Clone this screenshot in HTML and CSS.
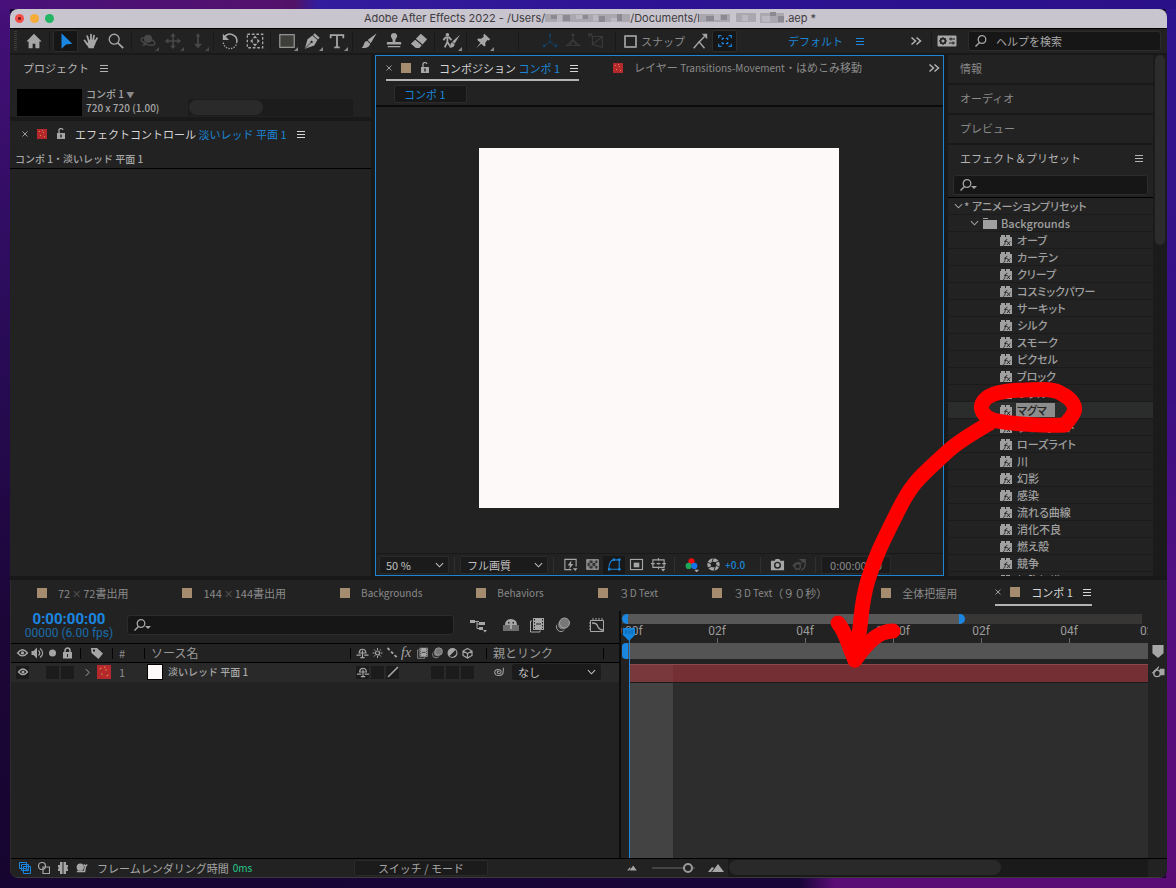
FILE: index.html
```
<!DOCTYPE html>
<html lang="ja">
  <head>
    <meta charset="UTF-8" />
    <meta name="viewport" content="width=device-width, initial-scale=1.0" />
    <title>Adobe After Effects 2022</title>
    <link rel="stylesheet" href="styles.css">
  </head>
  <body>
    <!-- icon sprite -->
    <svg class="sprite" aria-hidden="true">
      <symbol id="home" viewBox="0 0 20 20"><path fill="currentColor" d="M10 2 1.500 10.500H4V18h4.500v-5h3v5H16v-7.500h2.500z"/></symbol>
      <symbol id="arrow" viewBox="0 0 20 20"><path fill="currentColor" d="M5 1.500 17 13l-7 1-5 4.500z"/></symbol>
      <symbol id="hand" viewBox="0 0 20 20"><g fill="none" stroke="currentColor" stroke-linecap="round" stroke-width="2"><path d="M7.500 10 5.800 4.500M10 9V3M12.300 9.500l1-5.500M14.500 11l2.200-4M6 13.500 2.800 9.500"/></g><path fill="currentColor" d="M6.500 8.500h8.800c0 3-.3 5-1.300 6.500-.6 1-.8 2-.8 3H7.500C7 16 5 14.500 4 12.500l1-1 1.800 1z"/></symbol>
      <symbol id="zoom" viewBox="0 0 20 20"><g fill="none" stroke="currentColor"><circle cx="8" cy="8" r="5.500" stroke-width="1.500"/><path d="m12 12 6 6" stroke-width="2"/></g></symbol>
      <symbol id="orbit" viewBox="0 0 20 20"><g fill="none" stroke="currentColor" stroke-width="1.600"><ellipse cx="10" cy="10.500" rx="8" ry="3.500" transform="rotate(20 10 10.500)"/><path d="m4 15 3-1-1-3"/></g><circle cx="10" cy="7.500" r="4.500" fill="currentColor"/></symbol>
      <symbol id="pan" viewBox="0 0 20 20"><path fill="none" stroke="currentColor" stroke-width="1.800" d="M10 3v14M3 10h14"/><path fill="currentColor" d="m10 1 3 4H7zM10 19l-3-4h6zM1 10l4-3v6zM19 10l-4 3V7z"/></symbol>
      <symbol id="dolly" viewBox="0 0 20 20"><path fill="none" stroke="currentColor" stroke-width="2" d="M10 4v9"/><path fill="currentColor" d="m10 1 2.500 4h-5zM10 18l-4.500-5h9z"/></symbol>
      <symbol id="rotate" viewBox="0 0 20 20"><path fill="none" stroke="currentColor" stroke-width="1.800" d="M4 5.500A7.500 7.500 0 0 1 17.500 11"/><path fill="none" stroke="currentColor" stroke-width="1.500" stroke-dasharray="1.500 1.500" d="M17.500 11a7.500 7.500 0 0 1-15 0"/><path fill="currentColor" d="M2 2v7h7z"/></symbol>
      <symbol id="anchor" viewBox="0 0 20 20"><rect x="1.500" y="2.500" width="17" height="15" fill="none" stroke="currentColor" stroke-width="1.500" stroke-dasharray="3 2"/><path fill="currentColor" d="m10 4 2.500 3h-5zM10 16l-2.500-3h5zM4.500 10l3-2.500v5zM15.500 10l-3 2.500v-5z"/></symbol>
      <symbol id="rect" viewBox="0 0 20 20"><rect x="2" y="3" width="16" height="14" fill="#3e3e3b" stroke="currentColor" stroke-width="1.200"/></symbol>
      <symbol id="pen" viewBox="0 0 20 20"><path fill="currentColor" d="m13 1.500 5.500 5-1.800 1.800-5.500-5zM10.500 4l5.500 5-3.500 6L2 18.500 5 8z"/><path stroke="#222" stroke-width="1" fill="none" d="m2.500 18 6-6"/><circle cx="9.500" cy="11" r="1.300" fill="#222"/></symbol>
      <symbol id="type" viewBox="0 0 20 20"><path fill="none" stroke="currentColor" stroke-width="2" d="M3 7V3.500h14V7M10 4v13M7 17h6"/></symbol>
      <symbol id="brush" viewBox="0 0 20 20"><path fill="currentColor" d="m18.500 1.500-10 7.500 3.500 3.500zM8.200 10l3 3c0 3-4 5.500-9.500 4.500 2-1 2-2.500 3-5 .7-1.700 2-2.500 3.500-2.500z"/></symbol>
      <symbol id="stamp" viewBox="0 0 20 20"><path fill="currentColor" d="M10 1a3.500 3.500 0 0 1 2.500 6c-1 1-1 2.500-1 4H17a1 1 0 0 1 1 1v2H2v-2a1 1 0 0 1 1-1h5.500c0-1.500 0-3-1-4A3.500 3.500 0 0 1 10 1zM3 15.500h14v1.500H3z"/></symbol>
      <symbol id="eraser" viewBox="0 0 20 20"><path fill="currentColor" d="m12 2 7 6-5 6L6.500 7.500zM5.800 8.500l7.200 6.200-2.500 3H6.500L1 13z"/></symbol>
      <symbol id="roto" viewBox="0 0 20 20"><circle cx="6" cy="3" r="2" fill="currentColor"/><path fill="none" stroke="currentColor" stroke-width="2" d="m1.500 9 2.500-3h4l2.500 3M6 5v6l-3 6M6 11l3 5"/><path fill="currentColor" d="m20 3-8.500 7.500 2.500 2.500zM11.500 11.500l2.500 2.500c0 2-2.500 4-6 3.500 1.500-1 1-2 1.500-3.500.5-1.500 1-2.500 2-2.500z"/></symbol>
      <symbol id="pin" viewBox="0 0 20 20"><path fill="currentColor" d="m11.500 2 6.500 6-1.500 1.500-1.500-.5-2.500 3 .3 3-1.500 1L8 13l-5.500 5 4.500-6L3.500 8.500 5 7.200l3 .3L11 5l-.7-1.500z"/></symbol>
      <symbol id="axis" viewBox="0 0 20 20"><path fill="none" stroke="currentColor" d="M10 3v8l-7 5M10 11l7 5"/><path fill="currentColor" d="M9 2h2v3H9zM2 14h3v3H2zM15 14h3v3h-3zM9 10h2v2H9z"/></symbol>
      <symbol id="axis2" viewBox="0 0 20 20"><path fill="none" stroke="currentColor" stroke-width="1.300" d="M10 2v8l-7 5h5M10 10l7 5h-5M8 4l2-2 2 2"/><circle cx="10" cy="12" r="3" fill="none" stroke="currentColor"/></symbol>
      <symbol id="axis3" viewBox="0 0 20 20"><path fill="none" stroke="currentColor" stroke-width="1.300" d="M6 5v9l11 3V5H6L2 2M2 6V2h4M6 14l11-9"/></symbol>
      <symbol id="magnet" viewBox="0 0 20 20"><path fill="none" stroke="currentColor" stroke-width="1.600" d="m3 18 6-7 6 7M9 11l6-6"/><path fill="currentColor" d="M12 2h6v6z"/></symbol>
      <symbol id="frame" viewBox="0 0 20 20"><path fill="none" stroke="currentColor" stroke-width="1.300" d="M3 7V4h3M14 4h3v3M17 13v3h-3M6 16H3v-3M7 9V7h2M11 7h2v2M13 11v2h-2M9 13H7v-2"/></symbol>
      <symbol id="menu" viewBox="0 0 10 10"><path fill="none" stroke="currentColor" d="M1 2.500h8M1 5.500h8M1 8.500h8"/></symbol>
      <symbol id="more" viewBox="0 0 12 10"><path fill="none" stroke="currentColor" stroke-width="1.500" d="m1.500 1.500 4 3.500-4 3.500M6.500 1.500l4 3.500-4 3.500"/></symbol>
      <symbol id="panelset" viewBox="0 0 20 12"><rect x=".5" y=".5" width="19" height="11" rx="1" fill="currentColor"/><circle cx="6" cy="6" r="2.500" fill="none" stroke="#222" stroke-width="1.500"/><path stroke="#222" fill="none" d="M6 2v8M2 6h8M3.300 3.300l5.400 5.400M8.700 3.300 3.300 8.700M12 4h6M12 8h6M14 2.500v3M16 6.500v3"/><circle cx="6" cy="6" r="1.300" fill="currentColor"/></symbol>
      <symbol id="search" viewBox="0 0 16 14"><circle cx="8" cy="5.500" r="3.800" fill="none" stroke="currentColor" stroke-width="1.300"/><path stroke="currentColor" stroke-width="1.500" d="m5.500 8.500-4 4"/></symbol>
      <symbol id="searchdown" viewBox="0 0 18 14"><circle cx="8" cy="5.500" r="3.800" fill="none" stroke="currentColor" stroke-width="1.300"/><path stroke="currentColor" stroke-width="1.500" d="m5.500 8.500-4 4"/><path fill="currentColor" d="M12 8h6l-3 3z"/></symbol>
      <symbol id="lock-open" viewBox="0 0 10 12"><path fill="none" stroke="currentColor" stroke-width="1.300" d="M3 5V3a2 2 0 0 1 4-1"/><path fill="currentColor" fill-rule="evenodd" d="M1 5h8v6H1zm3.300 1.500v3h1.400v-3z"/></symbol>
      <symbol id="lock" viewBox="0 0 10 12"><path fill="none" stroke="currentColor" stroke-width="1.500" d="M2.500 6V3.500a2.500 2.500 0 0 1 5 0V6"/><path fill="currentColor" fill-rule="evenodd" d="M.5 5h9v6.500h-9zm4 2v3h1V7z"/></symbol>
      <symbol id="close" viewBox="0 0 6 6"><path stroke="currentColor" d="m.5.5 5 5m0-5-5 5"/></symbol>
      <symbol id="chev" viewBox="0 0 10 6"><path fill="none" stroke="currentColor" stroke-width="1.200" d="m1 1 4 4 4-4"/></symbol>
      <symbol id="chevr" viewBox="0 0 6 10"><path fill="none" stroke="currentColor" stroke-width="1.200" d="m1 1 4 4-4 4"/></symbol>
      <symbol id="fx" viewBox="0 0 12 11"><path fill="currentColor" d="M0 2h1V0h4v2h1V0h4v2h2v9H0z"/><path fill="none" stroke="#222" stroke-width=".9" d="M3.300 10.300c1.200.2 1.500-.8 1.900-3s.8-3.200 2.100-2.900M4.200 6.300h2.800M7.200 6.300l2.600 3.700M10.300 6.300 6.900 10"/></symbol>
      <symbol id="folder" viewBox="0 0 14 11"><path fill="currentColor" d="M0 2h14v9H0zM0 0h5v1H0z"/></symbol>
      <symbol id="bolt" viewBox="0 0 16 16"><path fill="none" stroke="currentColor" stroke-width="1.200" d="M9 13.500H2v-11h12V10"/><path fill="currentColor" d="M9 3.500 5 9h2.500L6.500 13 11 7.500H8.500zM10.500 12h5L13 15z"/></symbol>
      <symbol id="checker" viewBox="0 0 16 16"><rect x="2" y="3" width="12" height="10" fill="#333" stroke="currentColor" stroke-width="1.200"/><path fill="currentColor" d="M2 3h3v3.300H2zM8 3h3v3.300H8zM5 6.300h3v3.300H5zM11 6.300h3v3.300h-3zM2 9.600h3V13H2zM8 9.600h3V13H8z" opacity=".6"/></symbol>
      <symbol id="mask" viewBox="0 0 16 16"><path fill="none" stroke="currentColor" stroke-width="1.200" d="M2 13c0-5 1-9 5-10h6v10z"/><path fill="currentColor" d="M1 12h2.500v2.500H1zM6 1.500h2.500V4H6zM12 1.500h2.500V4H12zM12 12h2.500v2.500H12z"/></symbol>
      <symbol id="roi" viewBox="0 0 16 16"><rect x="1.600" y="2.600" width="12.800" height="10.800" fill="none" stroke="currentColor" stroke-width="1.200"/><path fill="currentColor" d="M5 6h6v5H5z"/></symbol>
      <symbol id="guides" viewBox="0 0 16 16"><path fill="none" stroke="currentColor" stroke-width="1.200" d="M2 3h12v8H2zM8 1v3M8 6v2M8 10v3M0 7h4M6 7h4M12 7h4"/><path fill="currentColor" d="M10.500 12.500h5L13 15.500z"/></symbol>
      <symbol id="rgb" viewBox="0 0 16 16"><circle cx="8" cy="4.500" r="3.300" fill="#f10d0d"/><circle cx="5" cy="9.500" r="3.300" fill="#1da75a"/><circle cx="11" cy="9.500" r="3.300" fill="#1473e6"/><path fill="#aaa" d="M11 13.500h5l-2.500 3z"/></symbol>
      <symbol id="aperture" viewBox="0 0 16 16"><circle cx="8" cy="8" r="4.800" fill="none" stroke="currentColor" stroke-width="3.600"/><path stroke="#222" d="M8 1 6 6.500M14 4.500 9.500 6M14.500 11 10 8.500M8.500 15 10 9.500M2 11.500 6.500 10M1.500 5.500 6 7.500"/></symbol>
      <symbol id="camera" viewBox="0 0 16 16"><path fill="currentColor" d="M1 4h4l1-2h4l1 2h4v10H1z"/><circle cx="8" cy="8.700" r="3" fill="none" stroke="#222" stroke-width="1.500"/></symbol>
      <symbol id="snap2" viewBox="0 0 16 16"><circle cx="6" cy="10" r="3" fill="none" stroke="currentColor" stroke-width="1.500"/><path fill="none" stroke="currentColor" stroke-width="1.500" d="M1 10c2-4 5-5 9-3M8 3h6v6M10 14c2-1 4-3 4-6"/><circle cx="12" cy="4" r="2" fill="currentColor"/></symbol>
      <symbol id="flow" viewBox="0 0 18 16"><path fill="currentColor" d="M1 3h5v3H1zM10 5h6v3h-6zM10 10h4v3h-4zM14 13h4l-2 2.500z"/><path fill="none" stroke="currentColor" d="M6 4.500h4M8 4.500v7h3M8 7h3"/></symbol>
      <symbol id="shy" viewBox="0 0 14 14"><path fill="none" stroke="currentColor" stroke-width="1.400" d="M0 9.500h5M9 9.500h5M7 4v8.500M4.500 12.500h5M3 7.500C3 1 11 1 11 7.500M3 7h8"/></symbol>
      <symbol id="shybig" viewBox="0 0 16 16"><path fill="#6e6e6e" d="M0 8h16v6H0z"/><path fill="currentColor" d="M2 7.500a6 5.500 0 0 1 12 0V8H9v4H7V8H2z"/><path fill="#222" d="M5 5h1.500v1.500H5zM9.500 5H11v1.500H9.500z"/></symbol>
      <symbol id="film" viewBox="0 0 16 16"><path fill="none" stroke="currentColor" d="M3 4H1.500v11H11v-1.500"/><path fill="currentColor" d="M4 1h11v12H4z"/><path stroke="#222" d="M5.500 2v10M13.500 2v10" stroke-dasharray="1.500 1.500"/><path fill="#222" d="M7 6.500h5v1H7z"/></symbol>
      <symbol id="blur" viewBox="0 0 16 16"><circle cx="6" cy="10" r="4.500" fill="none" stroke="currentColor"/><circle cx="7.500" cy="8" r="5" fill="#777" stroke="#222"/><circle cx="9.500" cy="6" r="5" fill="#777" stroke="currentColor"/></symbol>
      <symbol id="graph" viewBox="0 0 16 16"><path fill="none" stroke="currentColor" d="M1.500 3.500h13v11h-13zM4 1v3M7 1v3M10 1v3M13 1v3M0 6h2M0 9h2M0 12h2"/><path fill="none" stroke="currentColor" stroke-width="1.300" d="M3 6c4 0 5 1 6 4 1 2 2 3 5 3"/></symbol>
      <symbol id="eye" viewBox="0 0 12 10"><path fill="none" stroke="currentColor" stroke-width="1.300" d="M1.500 5c3-4 6-4 9 0-3 3.500-6 3.500-9 0z"/><circle cx="6" cy="5" r="1.500" fill="currentColor"/></symbol>
      <symbol id="sound" viewBox="0 0 12 12"><path fill="currentColor" d="M0 4h2l3.500-3.500v11L2 8H0z"/><path fill="none" stroke="currentColor" stroke-width="1.200" d="M7 3.500c1.500 1.500 1.500 3.500 0 5M8.500 1.500c3.500 2.500 3.500 6.500 0 9"/></symbol>
      <symbol id="dot" viewBox="0 0 8 8"><circle cx="4" cy="4" r="3.500" fill="currentColor"/></symbol>
      <symbol id="tag" viewBox="0 0 12 12"><path fill="currentColor" fill-rule="evenodd" d="M0 1h6l6 5.500L7.500 12 .5 6zm2 1.500v2h2v-2z"/></symbol>
      <symbol id="sun" viewBox="0 0 12 12"><circle cx="6" cy="6" r="2" fill="none" stroke="currentColor" stroke-width="1.200"/><path stroke="currentColor" d="M6 1v2M6 9v2M1 6h2M9 6h2M2.500 2.500l1.300 1.300M8.200 8.200l1.300 1.300M9.500 2.500 8.200 3.800M3.800 8.200 2.500 9.500"/></symbol>
      <symbol id="quality" viewBox="0 0 12 12"><path stroke="currentColor" stroke-width="1.800" stroke-dasharray="3 2" d="m1 1 10 10"/></symbol>
      <symbol id="slash" viewBox="0 0 12 12"><path stroke="currentColor" stroke-width="1.600" d="M1 11 11 1"/></symbol>
      <symbol id="adjust" viewBox="0 0 12 12"><circle cx="6" cy="6" r="5" fill="currentColor"/><path fill="#222" d="M9 3a4.300 4.300 0 0 1-6 6z"/></symbol>
      <symbol id="cube" viewBox="0 0 12 12"><path fill="none" stroke="currentColor" stroke-width="1.200" d="M6 1.500 10.500 4v4.500L6 11 1.500 8.500V4zM1.500 4 6 6.500 10.500 4M6 6.500V11"/></symbol>
      <symbol id="spiral" viewBox="0 0 14 12"><path fill="none" stroke="currentColor" stroke-width="1.200" d="M7 6c0-1.500-2-1.500-2 .3 0 2.500 4.500 2.500 4.500-.6C9.500 2 2 2 2 6.500 2 11.500 12 11.500 12 5V1"/></symbol>
      <symbol id="marker" viewBox="0 0 12 14"><path fill="currentColor" d="M0 0h12v9l-6 5-6-5z"/></symbol>
      <symbol id="shape" viewBox="0 0 14 14"><circle cx="6" cy="9" r="3.500" fill="none" stroke="currentColor" stroke-width="1.500"/><path fill="currentColor" d="M9 4h5v7H9zM0 9l8-8v2L3 9z"/></symbol>
      <symbol id="layers" viewBox="0 0 12 12"><path fill="#222" stroke="currentColor" d="M.5.5h7v6h-7zM2.500 2.500h7v6h-7zM4.500 4.500h7v7h-7z"/><path stroke="currentColor" d="M6.500 8h3M8 6.500v3"/></symbol>
      <symbol id="modes" viewBox="0 0 12 12"><circle cx="4" cy="4" r="3.500" fill="none" stroke="currentColor" stroke-width="1.200"/><path fill="none" stroke="currentColor" stroke-width="1.200" d="M5 5h6.500v6.500H5z"/></symbol>
      <symbol id="inout" viewBox="0 0 12 12"><path fill="currentColor" d="M3 0h2.500v12H3V9H1V7l1-1-1-1V3h2zM6.500 0H9v3h2v2l-1 1 1 1v2H9v3H6.500z"/></symbol>
      <symbol id="snail" viewBox="0 0 14 12"><circle cx="5" cy="5" r="4.200" fill="currentColor"/><path fill="none" stroke="currentColor" stroke-width="1.800" d="M1 10h9l1-6M9 2l2 2 2-2"/></symbol>
      <symbol id="hills" viewBox="0 0 16 10"><path fill="currentColor" d="m0 9 4-5 2 1-3 4zM4 9l6-8 6 8z"/></symbol>
      <symbol id="noise" viewBox="0 0 10 10"><path fill="#b5292d" d="M0 0h10v10H0z"/><path fill="#d8884f" d="M2 2h1v1H2zM6 3h1v1H6zM3 6h1v1H3zM7 7h1v1H7zM5 1h1v1H5z"/></symbol>
    </svg>

    <div class="window">
      <header class="titlebar">
        <span class="light red"></span><span class="light yellow"></span><span class="light green"></span>
        <h1 class="title">
          <span>Adobe After Effects 2022 - /Users/</span>
          <svg class="mosaic" viewBox="0 0 85 12"><path fill="#aaa7ae" d="M0 2h85v8H0z"/><path fill="#8c8a90" d="M6 3h6v4H6zM18 3h7v6h-7zM38 3h5v4h-5zM54 4h6v6h-6zM72 2h5v7h-5z"/><path fill="#bbb8c0" d="M12 3h5v7h-5zM31 3h6v4h-6zM48 3h5v6h-5zM66 6h6v4h-6z"/></svg>
          <span>/Documents/l</span>
          <svg class="mosaic" viewBox="0 0 85 12"><path fill="#aaa7ae" d="M0 2h30v8H0zM36 1h20v9H36zM60 1h24v10H60z"/><path fill="#8c8a90" d="M6 4h8v5H6zM21 3h6v5h-6zM70 0h6v4h-6zM78 4h6v6h-6z"/><path fill="#bbb8c0" d="M14 2h6v6h-6zM42 3h6v6h-6zM62 4h8v6h-8z"/></svg>
          <span>.aep *</span>
        </h1>
      </header>

      <div class="toolbar">
        <span class="grip"></span>
        <button class="tool" aria-label="ホーム"><svg><use href="#home"/></svg></button>
        <span class="sep"></span>
        <button class="tool active" aria-label="選択"><svg><use href="#arrow"/></svg></button>
        <button class="tool" aria-label="手のひら"><svg><use href="#hand"/></svg></button>
        <button class="tool" aria-label="ズーム"><svg><use href="#zoom"/></svg></button>
        <span class="sep"></span>
        <button class="tool sub dim" aria-label="周回"><svg><use href="#orbit"/></svg></button>
        <button class="tool sub dim" aria-label="パン"><svg><use href="#pan"/></svg></button>
        <button class="tool sub dim" aria-label="ドリー"><svg><use href="#dolly"/></svg></button>
        <span class="sep"></span>
        <button class="tool" aria-label="回転"><svg><use href="#rotate"/></svg></button>
        <button class="tool" aria-label="アンカーポイント"><svg><use href="#anchor"/></svg></button>
        <span class="sep"></span>
        <button class="tool sub" aria-label="長方形"><svg><use href="#rect"/></svg></button>
        <button class="tool sub" aria-label="ペン"><svg><use href="#pen"/></svg></button>
        <button class="tool sub" aria-label="文字"><svg><use href="#type"/></svg></button>
        <span class="sep"></span>
        <button class="tool" aria-label="ブラシ"><svg><use href="#brush"/></svg></button>
        <button class="tool" aria-label="スタンプ"><svg><use href="#stamp"/></svg></button>
        <button class="tool" aria-label="消しゴム"><svg><use href="#eraser"/></svg></button>
        <span class="sep"></span>
        <button class="tool sub" aria-label="ロトブラシ"><svg><use href="#roto"/></svg></button>
        <span class="sep"></span>
        <button class="tool sub" aria-label="パペットピン"><svg><use href="#pin"/></svg></button>
        <span class="sep wide"></span>
        <button class="tool small axis" aria-label="ローカル軸"><svg><use href="#axis"/></svg></button>
        <button class="tool small dim" aria-label="ワールド軸"><svg><use href="#axis2"/></svg></button>
        <button class="tool small dim" aria-label="ビュー軸"><svg><use href="#axis3"/></svg></button>
        <span class="sep snap-sep"></span>
        <label class="snap"><input type="checkbox"> スナップ</label>
        <button class="tool" aria-label="スナップ辺"><svg><use href="#magnet"/></svg></button>
        <button class="tool active" aria-label="スナップ範囲"><svg><use href="#frame"/></svg></button>
        <div class="workspace-bar">
          <a href="#" class="workspace">デフォルト</a>
          <svg class="i10 blue"><use href="#menu"/></svg>
          <svg class="more"><use href="#more"/></svg>
        </div>
        <span class="sep"></span>
        <svg class="panelset"><use href="#panelset"/></svg>
        <label class="search help"><svg><use href="#search"/></svg><input type="text" placeholder="ヘルプを検索" aria-label="ヘルプを検索"></label>
      </div>

      <main class="panels">
        <div class="left">
          <section class="panel project">
            <h2 class="panel-title">プロジェクト <svg class="i10"><use href="#menu"/></svg></h2>
            <div class="project-info">
              <div class="thumb"></div>
              <div class="info">コンポ 1 <span class="tri">▼</span><br>720 x 720 (1.00)</div>
              <div class="track"><div class="pill"></div></div>
            </div>
          </section>
          <section class="panel controls">
            <h2 class="panel-title bright"><svg class="x"><use href="#close"/></svg><svg class="chip"><use href="#noise"/></svg><svg class="lock"><use href="#lock-open"/></svg><span>エフェクトコントロール <a href="#">淡いレッド 平面 1</a></span><svg class="i10"><use href="#menu"/></svg></h2>
            <p class="path">コンポ 1・淡いレッド 平面 1</p>
          </section>
        </div>

        <section class="panel comp">
          <div class="comp-tabs">
            <h2 class="comp-tab current"><svg class="x"><use href="#close"/></svg><span class="chip tan"></span><svg class="lock"><use href="#lock-open"/></svg><span>コンポジション <a href="#">コンポ 1</a></span><svg class="i10"><use href="#menu"/></svg></h2>
            <h2 class="comp-tab"><svg class="chip"><use href="#noise"/></svg><span>レイヤー <small>Transitions-Movement</small>・はめこみ移動</span></h2>
            <svg class="more"><use href="#more"/></svg>
          </div>
          <nav class="crumbs"><a href="#">コンポ 1</a></nav>
          <div class="viewer"><div class="canvas"></div></div>
          <div class="view-bar">
            <span class="select zoom-select"><select aria-label="拡大率"><option>50 %</option></select><svg><use href="#chev"/></svg></span>
            <span class="bar"></span>
            <span class="select"><select aria-label="画質"><option>フル画質</option></select><svg><use href="#chev"/></svg></span>
            <span class="bar"></span>
            <button aria-label="高速プレビュー"><svg><use href="#bolt"/></svg></button>
            <button aria-label="透明グリッド"><svg><use href="#checker"/></svg></button>
            <button class="blue on" aria-label="マスク"><svg><use href="#mask"/></svg></button>
            <button aria-label="目標範囲"><svg><use href="#roi"/></svg></button>
            <button aria-label="ガイド"><svg><use href="#guides"/></svg></button>
            <span class="bar"></span>
            <button aria-label="チャンネル"><svg><use href="#rgb"/></svg></button>
            <button aria-label="露出"><svg><use href="#aperture"/></svg></button>
            <span class="exposure">+0.0</span>
            <span class="bar"></span>
            <button aria-label="スナップショット"><svg><use href="#camera"/></svg></button>
            <button class="dim" aria-label="スナップショットを表示"><svg><use href="#snap2"/></svg></button>
            <span class="bar"></span>
            <button class="time">0:00:00:00</button>
          </div>
        </section>

        <aside class="side">
          <div class="stack">
            <h2 class="fold">情報</h2>
            <h2 class="fold">オーディオ</h2>
            <h2 class="fold">プレビュー</h2>
            <section class="presets">
              <h2 class="fold bright">エフェクト＆プリセット <svg class="i10"><use href="#menu"/></svg></h2>
              <label class="search"><svg><use href="#searchdown"/></svg><input type="text" aria-label="エフェクトを検索"></label>
              <ul class="tree">
                <li class="root"><svg class="chev"><use href="#chev"/></svg>* アニメーションプリセット</li>
                <li class="group"><svg class="chev"><use href="#chev"/></svg><svg class="folder"><use href="#folder"/></svg>Backgrounds</li>
                <li><svg><use href="#fx"/></svg><span>オーブ</span></li>
                <li><svg><use href="#fx"/></svg><span>カーテン</span></li>
                <li><svg><use href="#fx"/></svg><span>クリープ</span></li>
                <li><svg><use href="#fx"/></svg><span>コスミックパワー</span></li>
                <li><svg><use href="#fx"/></svg><span>サーキット</span></li>
                <li><svg><use href="#fx"/></svg><span>シルク</span></li>
                <li><svg><use href="#fx"/></svg><span>スモーク</span></li>
                <li><svg><use href="#fx"/></svg><span>ピクセル</span></li>
                <li><svg><use href="#fx"/></svg><span>ブロック</span></li>
                <li><svg><use href="#fx"/></svg><span>ホタル</span></li>
                <li class="selected"><svg><use href="#fx"/></svg><span>マグマ</span></li>
                <li><svg><use href="#fx"/></svg><span>ライトボード</span></li>
                <li><svg><use href="#fx"/></svg><span>ローズライト</span></li>
                <li><svg><use href="#fx"/></svg><span>川</span></li>
                <li><svg><use href="#fx"/></svg><span>幻影</span></li>
                <li><svg><use href="#fx"/></svg><span>感染</span></li>
                <li><svg><use href="#fx"/></svg><span>流れる曲線</span></li>
                <li><svg><use href="#fx"/></svg><span>消化不良</span></li>
                <li><svg><use href="#fx"/></svg><span>燃え殻</span></li>
                <li><svg><use href="#fx"/></svg><span>競争</span></li>
                <li><svg><use href="#fx"/></svg><span>細胞組織</span></li>
              </ul>
            </section>
          </div>
          <div class="scroll"><div class="scroll-thumb"></div></div>
        </aside>
      </main>

      <section class="timeline">
        <nav class="tabs">
          <a href="#"><span class="chip tan"></span>72 <i>✕</i> 72書出用</a>
          <a href="#"><span class="chip tan"></span>144 <i>✕</i> 144書出用</a>
          <a href="#"><span class="chip tan"></span><small>Backgrounds</small></a>
          <a href="#"><span class="chip tan"></span><small>Behaviors</small></a>
          <a href="#"><span class="chip tan"></span>３<small>D Text</small></a>
          <a href="#"><span class="chip tan"></span>３<small>D Text</small>（９０秒）</a>
          <a href="#"><span class="chip tan"></span>全体把握用</a>
          <a href="#" class="current"><svg class="x"><use href="#close"/></svg><span class="chip tan"></span>コンポ 1<svg class="i10"><use href="#menu"/></svg></a>
        </nav>

        <div class="timeline-body">
          <div class="outline">
            <div class="outline-head">
              <div class="clock"><strong>0:00:00:00</strong><span>00000 (6.00 fps)</span></div>
              <label class="search"><svg><use href="#searchdown"/></svg><input type="text" aria-label="レイヤーを検索"></label>
              <div class="outline-tools">
                <svg class="flow"><use href="#flow"/></svg>
                <svg><use href="#shybig"/></svg>
                <svg><use href="#film"/></svg>
                <svg><use href="#blur"/></svg>
                <svg class="graph"><use href="#graph"/></svg>
              </div>
            </div>
            <table class="layers">
              <colgroup><col class="c-av"><col class="c-label"><col class="c-num"><col><col class="c-switch"><col class="c-parent"><col class="c-end"></colgroup>
              <thead>
                <tr>
                  <th><div class="cells"><svg><use href="#eye"/></svg><svg><use href="#sound"/></svg><svg class="dot"><use href="#dot"/></svg><svg><use href="#lock"/></svg></div></th>
                  <th class="center"><svg><use href="#tag"/></svg></th>
                  <th class="num">#</th>
                  <th class="source">ソース名</th>
                  <th><div class="cells"><svg><use href="#shy"/></svg><svg><use href="#sun"/></svg><svg><use href="#quality"/></svg><em>fx</em><svg><use href="#film"/></svg><svg><use href="#blur"/></svg><svg><use href="#adjust"/></svg><svg><use href="#cube"/></svg></div></th>
                  <th class="parent">親とリンク</th>
                  <th></th>
                </tr>
              </thead>
              <tbody>
                <tr>
                  <td><div class="cells"><b><svg><use href="#eye"/></svg></b><span></span><b></b><b></b></div></td>
                  <td><div class="label"><svg class="chevr"><use href="#chevr"/></svg><svg class="swatch"><use href="#noise"/></svg></div></td>
                  <td class="num">1</td>
                  <td><div class="name"><span class="solid"></span>淡いレッド 平面 1</div></td>
                  <td><div class="cells"><b><svg><use href="#shy"/></svg></b><b></b><b><svg><use href="#slash"/></svg></b><span></span><span></span><b></b><b></b><b></b></div></td>
                  <td colspan="2"><div class="link"><svg><use href="#spiral"/></svg><span class="select"><select aria-label="親とリンク"><option>なし</option></select><svg><use href="#chev"/></svg></span></div></td>
                </tr>
              </tbody>
            </table>
          </div>

          <div class="tracks">
            <div class="navigator"><div class="range"></div></div>
            <div class="ruler"><span>0:00f</span><span>02f</span><span>04f</span><span>01:00f</span><span>02f</span><span>04f</span><span>02:00f</span></div>
            <div class="work-area"></div>
            <div class="layer-bar"></div>
            <div class="rows"><div class="cached"></div></div>
            <svg class="playhead-cap" viewBox="0 0 14 14"><path fill="#1484dc" d="M1 0h12v7l-6 6-6-6z"/><path stroke="#0e5c9c" stroke-width="1" d="M4 2v4M7 2v4M10 2v4"/></svg>
            <div class="playhead"></div>
          </div>
          <div class="gutter"><svg><use href="#marker"/></svg><svg><use href="#shape"/></svg></div>
        </div>

        <footer class="status">
          <div class="status-left">
            <svg class="blue"><use href="#layers"/></svg><svg><use href="#modes"/></svg><svg><use href="#inout"/></svg><svg><use href="#snail"/></svg>
            <span class="render">フレームレンダリング時間</span><small class="ms">0ms</small>
            <button class="mode">スイッチ / モード</button>
          </div>
          <div class="zoomer">
            <svg class="hill-small"><use href="#hills"/></svg>
            <input type="range" min="0" max="100" value="95" aria-label="ズーム">
            <svg class="hill-big"><use href="#hills"/></svg>
          </div>
          <div class="hscroll"><div class="pill"></div></div>
        </footer>
      </section>
    </div>

    <!-- hand drawn note: drag the preset onto the layer -->
    <svg class="note" viewBox="0 0 1176 888" preserveAspectRatio="none" aria-hidden="true">
      <g fill="none" stroke="#f00" stroke-width="15" stroke-linecap="round" stroke-linejoin="round">
        <path d="M1065 425C1045 426 1010 424 993 420 983 417 979 408 983 402 988 393 1005 390 1025 390 1045 389 1055 389 1062 394 1072 399 1076 406 1074 412 1072 418 1068 420 1065 425"/>
        <path d="M990 423C975 432 960 440 947 452 920 477 912 482 897 513 882 543 875 557 868 580 862 600 862 610 860 627L855 660"/>
        <path d="M838 623c8 9 10 22 17 37M893 631c-15 0-26 12-38 29"/>
      </g>
    </svg>
  </body>
</html>
```

FILE: styles.css
```
* {
  box-sizing: border-box;
  margin: 0;
  padding: 0;
}

body {
  display: flex;
  height: 100vh;
  min-height: 640px;
  padding: 9px 9px 10px 10px;
  position: relative;
  overflow: hidden;
  color: #a6a6a6;
  font: 11px/16px "Noto Sans CJK JP", sans-serif;
  background:
    linear-gradient(90deg, #48107a 0, #53126c 24%, #521266 25%, #331c9e 27%, #2d1292 60%, #2a1088) top / 100% 9px no-repeat,
    linear-gradient(90deg, #170533 0, #190638 68%, #5b0d76 71%, #5a0c74) bottom / 100% 10px no-repeat,
    linear-gradient(#45107a, #2a0c5a 35%, #1c0638 70%, #170530) left / 10px 100% no-repeat,
    linear-gradient(#2e1590, #3b0f82 45%, #560f80 70%, #5a0c76) right / 10px 100% no-repeat,
    #170530;
}

a {
  color: #1b86d6;
  text-decoration: none;
}

button,
input,
select {
  border: none;
  background: none;
  color: inherit;
  font: inherit;
}

h1,
h2,
th {
  font-size: 11px;
  font-weight: 400;
}

small {
  font-size: 10px;
}

svg {
  display: block;
  flex: none;
  overflow: visible;
}

.sprite {
  position: absolute;
  width: 0;
  height: 0;
}

.window {
  display: flex;
  flex-direction: column;
  flex: 1;
  min-width: 0;
  border-radius: 8px;
  overflow: hidden;
  background: #191919;
  border-bottom: 1px solid #3a3a3a;
}

.blue {
  color: #1b86e0;
}

.dim {
  color: #484848;
}

.i10 {
  width: 10px;
  height: 10px;
}

.x {
  width: 6px;
  height: 6px;
  color: #9a9a9a;
}

.chip {
  width: 10px;
  height: 10px;
  flex: none;
}

.tan {
  background: #a58c6e;
}

.lock {
  width: 10px;
  height: 12px;
  color: #a6a6a6;
}

.more {
  width: 12px;
  height: 10px;
  color: #b4b4b4;
}

/* title bar */
.titlebar {
  display: flex;
  align-items: center;
  gap: 6px;
  height: 20px;
  padding-left: 5px;
  background: #c9c5ce;
  border-bottom: 1px solid #000;
  position: relative;
}

.light {
  width: 9px;
  height: 9px;
  border-radius: 50%;
}

.red {
  background: radial-gradient(circle, #7c1712 1px, #f4504b 2px);
}

.yellow {
  background: #f5ac3a;
}

.green {
  background: #23b563;
}

.title {
  display: flex;
  align-items: center;
  justify-content: center;
  flex: 1;
  height: 18px;
  padding: 0 47px 2px 0;
  color: #3d3b40;
  font: 11px/16px Inter, sans-serif;
  white-space: nowrap;
}

.mosaic {
  width: 85px;
  height: 12px;
}

/* toolbar */
.toolbar {
  display: flex;
  align-items: center;
  height: 24px;
  padding: 0 6px 0 4px;
  background: #222;
  flex: none;
}

.grip {
  width: 3px;
  height: 20px;
  margin-right: 4px;
  background: repeating-linear-gradient(#3c3c3c 0 1px, #222 1px 2px);
}

.tool {
  display: flex;
  align-items: center;
  justify-content: center;
  width: 25px;
  height: 22px;
  position: relative;
}

.tool svg {
  width: 18px;
  height: 18px;
}

.tool.active {
  color: #1b86e0;
  background: #161616;
  border: 1px solid #2c2c2c;
  border-radius: 2px;
}

.tool.sub::after {
  content: "";
  position: absolute;
  right: 1px;
  bottom: 1px;
  border-style: solid;
  border-width: 0 0 4px 4px;
  border-color: transparent transparent #8a8a8a;
}

.tool.sub.dim::after {
  border-bottom-color: #484848;
}

.tool.small {
  width: 23px;
}

.tool.small.dim {
  color: #3a3a3a;
}

.tool.axis {
  color: #123f64;
}

.sep {
  width: 1px;
  height: 20px;
  margin: 0 3px;
  background: #191919;
}

.sep.wide {
  margin: 0 19px 0 23px;
}

.snap-sep {
  margin: 0 8px 0 8px;
}

.snap {
  display: flex;
  align-items: center;
  gap: 4px;
  color: #8a8a8a;
  white-space: nowrap;
  margin-right: 2px;
}

.snap input {
  appearance: none;
  width: 13px;
  height: 13px;
  border: 2px solid #8f8f8f;
  border-radius: 1px;
}

.workspace-bar {
  display: flex;
  align-items: center;
  margin-left: auto;
  padding-right: 6px;
}

.workspace-bar .i10 {
  margin: 0 45px 0 12px;
}

.panelset {
  width: 20px;
  height: 12px;
  margin: 0 11px 0 2px;
}

.search {
  display: flex;
  align-items: center;
  gap: 6px;
  height: 20px;
  padding: 0 5px;
  background: #161616;
  border: 1px solid #2c2c2c;
  border-radius: 3px;
}

.search svg {
  width: 18px;
  height: 14px;
}

.search input {
  flex: 1;
  min-width: 0;
  outline: none;
}

.search input::placeholder {
  color: #a6a6a6;
}

.help {
  width: 193px;
}

.help svg {
  width: 16px;
}

/* upper panels */
.panels {
  display: grid;
  grid-template-columns: 361px minmax(0, 1fr) 219px;
  gap: 4px;
  flex: 1;
  min-height: 0;
  padding: 2px 0 4px;
}

.panel {
  background: #222;
}

.left {
  display: flex;
  flex-direction: column;
  gap: 4px;
  min-width: 0;
}

.panel-title {
  display: flex;
  align-items: center;
  gap: 10px;
  height: 26px;
  padding-left: 13px;
  color: #b4b4b4;
  white-space: nowrap;
}

.project {
  height: 62px;
}

.project-info {
  display: flex;
  padding: 6px 18px 0 7px;
}

.thumb {
  width: 65px;
  height: 27px;
  margin: 2px 4px 0 0;
  background: #000;
}

.info {
  font-size: 10px;
  line-height: 13px;
  flex: 1;
  font-weight: 500;
}

.tri {
  font-size: 8px;
  color: #8a8a8a;
}

.track {
  width: 165px;
  height: 17px;
  margin-top: 12px;
  padding: 1px;
  background: #1c1c1c;
}

.track .pill {
  width: 74px;
  height: 15px;
  border-radius: 8px;
  background: #2a2a2a;
}

.controls {
  flex: 1;
}

.controls .panel-title {
  gap: 9px;
  padding-left: 12px;
}

.bright {
  color: #d6d6d6;
}

.path {
  height: 22px;
  padding: 4px 0 0 5px;
  font-size: 10px;
  font-weight: 500;
  border-bottom: 1px solid #000;
}

/* composition viewer */
.comp {
  display: flex;
  flex-direction: column;
  min-width: 0;
  border: 1px solid #1b86d6;
}

.comp-tabs {
  display: flex;
  align-items: flex-start;
  height: 27px;
  padding: 0 3px 0 10px;
}

.comp-tabs .more {
  margin: 7px 0 0 auto;
}

.comp-tab {
  display: flex;
  align-items: center;
  height: 25px;
  color: #8a8a8a;
  white-space: nowrap;
  border-bottom: 2px solid transparent;
}

.comp-tab.current {
  gap: 9px;
  margin-right: 34px;
  color: #d6d6d6;
  border-color: #b4b4b4;
}

.comp-tab .chip {
  margin-right: 11px;
}

.comp-tab.current .chip {
  margin: 0;
}

.crumbs {
  height: 24px;
  padding: 2px 0 0 18px;
  border-bottom: 2px solid #0c0c0c;
}

.crumbs a {
  display: block;
  width: 73px;
  height: 18px;
  padding-left: 9px;
  background: #181818;
  border: 1px solid #2c2c2c;
  border-radius: 2px;
}

.viewer {
  display: flex;
  align-items: center;
  justify-content: center;
  flex: 1;
  min-height: 0;
  padding: 0 2px 4px 0;
}

.canvas {
  width: 360px;
  aspect-ratio: 1;
  background: #fdf9f9;
}

.view-bar {
  display: flex;
  align-items: center;
  height: 22px;
  padding-left: 3px;
  border-top: 1px solid #191919;
  flex: none;
}

.select {
  display: flex;
  align-items: center;
  width: 88px;
  height: 18px;
  position: relative;
  background: #1b1b1b;
  border: 1px solid #2a2a2a;
  border-radius: 2px;
  color: #c0c0c0;
}

.zoom-select {
  width: 70px;
}

.select select {
  appearance: none;
  width: 100%;
  height: 16px;
  padding-left: 6px;
  line-height: 16px;
}

.select svg {
  position: absolute;
  right: 4px;
  width: 9px;
  height: 6px;
}

.bar {
  width: 1px;
  height: 16px;
  margin: 0 5px;
  background: #303030;
}

.view-bar button {
  display: flex;
  align-items: center;
  justify-content: center;
  width: 22px;
  height: 18px;
}

.view-bar button svg {
  width: 15px;
  height: 15px;
}

.view-bar .on {
  background: #181818;
}

.exposure {
  width: 31px;
  padding-left: 1px;
  color: #1b86d6;
  font-size: 10px;
  font-weight: 500;
}

.view-bar .time {
  width: 70px;
  border: 1px solid #2a2a2a;
  background: #1b1b1b;
  color: #8a8a8a;
}

/* side panels */
.side {
  display: flex;
  min-width: 0;
  min-height: 0;
  overflow: hidden;
}

.stack {
  display: flex;
  flex-direction: column;
  gap: 2px;
  flex: 1;
  min-width: 0;
}

.fold {
  display: flex;
  align-items: center;
  justify-content: space-between;
  height: 28px;
  padding: 0 9px 2px 12px;
  background: #222;
  color: #8a8a8a;
  flex: none;
}

.fold.bright {
  color: #b4b4b4;
}

.presets {
  display: flex;
  flex-direction: column;
  flex: 1;
  min-height: 0;
  background: #222;
}

.presets .search {
  margin: 2px 5px;
  flex: none;
}

.tree {
  flex: 1;
  min-height: 0;
  overflow: hidden;
  list-style: none;
  font-weight: 500;
  font-feature-settings: "palt";
  border-top: 1px solid #000;
}

.tree li {
  display: flex;
  align-items: center;
  gap: 4px;
  height: 17px;
  padding-left: 52px;
  border-bottom: 1px solid #1b1b1b;
  color: #a0a0a0;
  white-space: nowrap;
}

.tree li svg {
  width: 12px;
  height: 11px;
}

.tree li .chev {
  width: 9px;
  height: 6px;
}

.tree li .folder {
  width: 14px;
}

.tree li span {
  padding: 0 1px;
  line-height: 14px;
}

.tree .root {
  gap: 1px;
  padding-left: 6px;
}

.tree .group {
  padding-left: 22px;
}

.tree .selected {
  background: #2b2d2c;
}

.tree .selected span {
  background: #8c8c8c;
  color: #222;
  padding-right: 8px;
}

.scroll {
  width: 14px;
  background: #1b1b1b;
}

.scroll-thumb {
  width: 10px;
  height: 190px;
  margin-left: 2px;
  border-radius: 5px;
  background: #2c2c2c;
}

/* timeline */
.timeline {
  display: flex;
  flex-direction: column;
  height: 297px;
  flex: none;
  background: #222;
  border-left: 1px solid #2c2c2c;
}

.tabs {
  display: flex;
  gap: 54px;
  height: 31px;
  padding-left: 26px;
  white-space: nowrap;
}

.tabs a {
  display: flex;
  align-items: center;
  height: 27px;
  color: #8a8a8a;
  border-bottom: 2px solid transparent;
}

.tabs .chip {
  margin-right: 11px;
}

.tabs i {
  color: #4c4c4c;
  font-style: normal;
  margin: 0 2px;
}

.tabs .current {
  height: 26px;
  margin-left: -16px;
  color: #d6d6d6;
  border-color: #b4b4b4;
}

.tabs .x {
  margin-right: 9px;
}

.tabs .i10 {
  margin-left: 9px;
}

.timeline-body {
  display: grid;
  grid-template-columns: 610px minmax(0, 1fr) 19px;
  flex: 1;
  min-height: 0;
}

.outline {
  min-width: 0;
  border-right: 2px solid #0c0c0c;
}

.outline-head {
  display: flex;
  align-items: center;
  height: 32px;
  padding-bottom: 4px;
}

.clock {
  display: flex;
  flex-direction: column;
  align-items: center;
  width: 116px;
  margin-top: 2px;
  color: #1a6ba8;
  font: 12px/14px Roboto, sans-serif;
}

.clock strong {
  color: #1b86e0;
  font: bold 15px/14px Roboto, sans-serif;
}

.outline .search {
  flex: 1;
}

.outline-tools {
  display: flex;
  align-items: center;
  gap: 10px;
  width: 165px;
  padding-left: 15px;
}

.outline-tools svg {
  width: 16px;
  height: 16px;
}

.outline-tools .flow {
  width: 18px;
  margin-right: 6px;
}

.outline-tools .graph {
  margin-left: 8px;
}

.layers {
  width: 100%;
  table-layout: fixed;
  border-collapse: collapse;
}

.c-av {
  width: 70px;
}

.c-label,
.c-num {
  width: 32px;
}

.c-switch {
  width: 136px;
}

.c-parent {
  width: 117px;
}

.c-end {
  width: 15px;
}

.layers tr {
  height: 19px;
}

.layers thead tr {
  border-top: 1px solid #000;
  border-bottom: 1px solid #000;
}

.layers tbody tr {
  background: #292929;
}

.layers th {
  height: 19px;
  text-align: left;
  background: linear-gradient(#050505, #050505) right / 1px 11px no-repeat;
}

.layers th:last-child {
  background: none;
}

.layers th svg,
.layers td svg {
  width: 12px;
  height: 12px;
}

.layers th .dot {
  width: 8px;
  height: 8px;
  margin: 0 2px;
}

.center svg {
  margin: 0 auto;
}

.layers .num {
  padding-left: 6px;
  color: #8a8a8a;
}

.layers .source,
.layers .parent {
  padding-left: 6px;
  color: #9a9a9a;
  font-size: 12px;
}

.cells {
  display: flex;
  align-items: center;
  gap: 2px;
  padding-left: 5px;
}

.cells > * {
  width: 13px;
  flex: none;
}

.cells b {
  display: flex;
  align-items: center;
  justify-content: center;
  height: 13px;
  background: #1b1b1b;
}

.layers .cells > svg {
  width: 13px;
}

.layers .cells > .dot {
  width: 9px;
}

.cells em {
  font: italic 14px/14px "Liberation Serif", serif;
}

.cells span {
  height: 13px;
}

.label {
  display: flex;
  align-items: center;
  gap: 7px;
  padding-left: 4px;
}

.layers .chevr {
  width: 5px;
  height: 9px;
}

.layers .swatch {
  width: 14px;
  height: 14px;
}

.name {
  display: flex;
  align-items: center;
  gap: 5px;
  padding-left: 2px;
  font-size: 10px;
  font-weight: 500;
}

.solid {
  width: 16px;
  height: 16px;
  background: #fdf9f9;
  border: 1px solid #000;
}

.link {
  display: flex;
  align-items: center;
  gap: 7px;
  padding-left: 6px;
}

.link .select {
  width: 89px;
  height: 16px;
  border-color: #1b1b1b;
}

.layers .select svg {
  width: 9px;
  height: 6px;
}

.link select {
  padding-left: 5px;
}

.tracks {
  display: flex;
  flex-direction: column;
  min-width: 0;
  padding-left: 8px;
  position: relative;
  overflow: hidden;
}

.navigator {
  height: 10px;
  margin: 3px 6px 0 -7px;
  background: #383635;
}

.range {
  width: 66%;
  height: 10px;
  border: solid #1b86e0;
  border-width: 0 6px;
  border-radius: 5px;
  background: #585858;
}

.ruler {
  display: flex;
  height: 19px;
  margin-left: -44px;
  color: #9a9a9a;
  font: 12px/14px Roboto, sans-serif;
}

.ruler span {
  width: 88px;
  flex: none;
  text-align: center;
  background: linear-gradient(#6a6a6a, #6a6a6a) center bottom / 1px 5px no-repeat;
}

.work-area {
  height: 16px;
  margin-left: -7px;
  margin-bottom: 5px;
  border-left: 6px solid #1b86e0;
  border-radius: 4px 0 0 4px;
  background: #545454;
  flex: none;
}

.layer-bar {
  height: 18px;
  background: linear-gradient(90deg, #79383c 44px, #732f33 44px);
  border-top: 1px solid #8a4a4d;
  flex: none;
}

.rows {
  flex: 1;
  background: #2d2d2d;
  border-top: 1px solid #1b1b1b;
}

.cached {
  width: 44px;
  height: 100%;
  background: #434343;
}

.playhead {
  position: absolute;
  left: 8px;
  top: 30px;
  bottom: 0;
  width: 1px;
  background: #1b86e0;
}

.playhead-cap {
  position: absolute;
  left: 1px;
  top: 17px;
  width: 14px;
  height: 14px;
}

.gutter {
  display: flex;
  flex-direction: column;
  align-items: center;
  gap: 7px;
  padding-top: 34px;
}

.gutter svg {
  width: 14px;
  height: 13px;
}

/* status bar */
.status {
  display: grid;
  grid-template-columns: 610px 107px minmax(0, 1fr);
  height: 19px;
  border-top: 1px solid #000;
  flex: none;
}

.status-left {
  display: flex;
  align-items: center;
  gap: 7px;
  padding: 0 133px 0 8px;
}

.status-left svg {
  width: 12px;
  height: 12px;
}

.render {
  margin-left: 2px;
  white-space: nowrap;
}

.ms {
  margin-left: -3px;
  color: #25c98a;
}

.mode {
  width: 134px;
  height: 16px;
  margin-left: auto;
  background: #1b1b1b;
  border: 1px solid #2a2a2a;
  border-radius: 2px;
  line-height: 14px;
}

.zoomer {
  display: flex;
  align-items: center;
  gap: 13px;
  padding-left: 6px;
}

.hill-small {
  width: 10px;
  height: 6px;
}

.hill-big {
  width: 16px;
  height: 10px;
}

.zoomer input {
  appearance: none;
  width: 43px;
  height: 2px;
  margin-left: 2px;
  background: #444;
}

.zoomer input::-webkit-slider-thumb {
  appearance: none;
  width: 10px;
  height: 10px;
  border: 2px solid #9a9a9a;
  border-radius: 50%;
  background: #222;
}

.hscroll {
  margin-right: 19px;
  padding: 1px;
  background: #1a1a1a;
}

.hscroll .pill {
  width: 65%;
  height: 15px;
  border-radius: 8px;
  background: #292929;
}

/* hand drawn note over the window */
.note {
  position: absolute;
  left: 0;
  top: 0;
  width: 100%;
  height: 100%;
  pointer-events: none;
}
```
